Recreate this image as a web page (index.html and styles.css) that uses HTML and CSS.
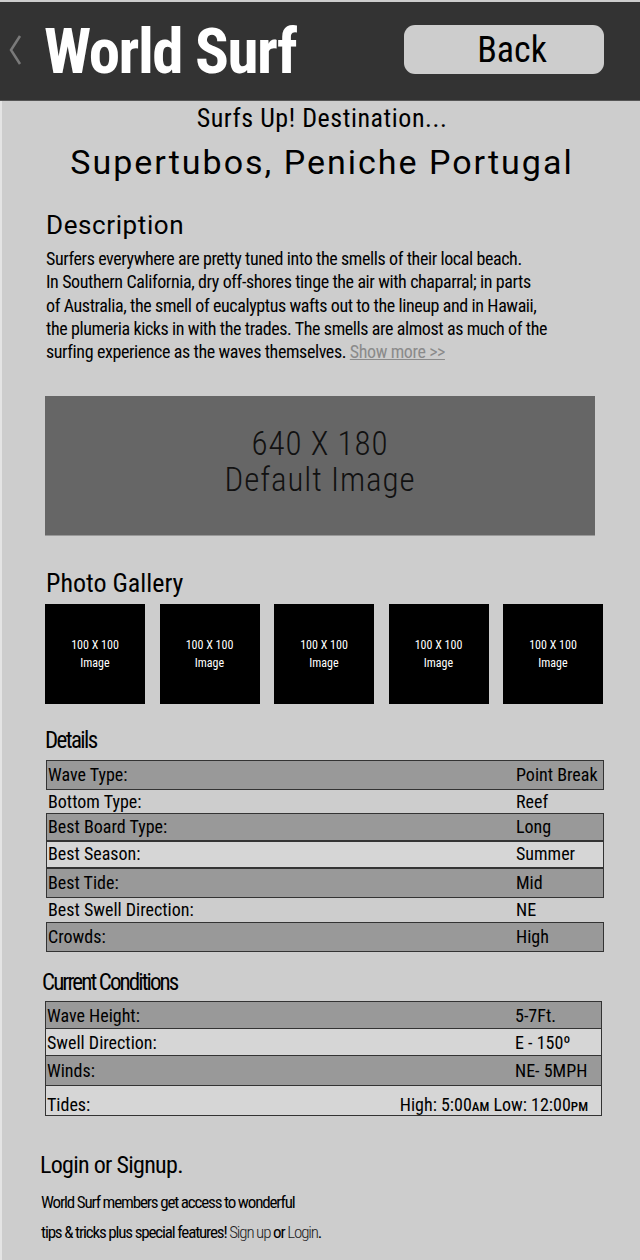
FILE: index.html
```html
<!DOCTYPE html>
<html lang="en">
<head>
<meta charset="utf-8">
<title>World Surf</title>
<link rel="stylesheet" href="styles.css">
</head>
<body>
<div class="page">
  <header class="topbar">
    <svg class="chev" width="14" height="32" viewBox="0 0 14 32"><polyline points="12,2 3,16 12,30" fill="none" stroke="#7a7a7a" stroke-width="2.5"/></svg>
    <h1 class="brand">World Surf</h1>
    <a class="back-btn" href="#">Back</a>
  </header>
  <main class="content">
    <p class="kicker">Surfs Up! Destination...</p>
    <h2 class="dest">Supertubos, Peniche Portugal</h2>

    <section class="desc">
      <h3 class="desc-title">Description</h3>
      <p class="desc-text">Surfers everywhere are pretty tuned into the smells of their local beach.<br>In Southern California, dry off-shores tinge the air with chaparral; in parts<br>of Australia, the smell of eucalyptus wafts out to the lineup and in Hawaii,<br>the plumeria kicks in with the trades. The smells are almost as much of the<br>surfing experience as the waves themselves. <a class="more" href="#">Show more &gt;&gt;</a></p>
    </section>

    <div class="hero"><span class="hero-line">640 X 180</span><span class="hero-line">Default Image</span></div>

    <h3 class="gallery-title">Photo Gallery</h3>
    <div class="gallery">
      <div class="thumb">100 X 100<br>Image</div>
      <div class="thumb">100 X 100<br>Image</div>
      <div class="thumb">100 X 100<br>Image</div>
      <div class="thumb">100 X 100<br>Image</div>
      <div class="thumb">100 X 100<br>Image</div>
    </div>

    <h3 class="details-title">Details</h3>
    <div class="table details">
      <div class="row shade h30"><span>Wave Type:</span><span>Point Break</span></div>
      <div class="row plain h23"><span>Bottom Type:</span><span>Reef</span></div>
      <div class="row shade h28"><span>Best Board Type:</span><span>Long</span></div>
      <div class="row light h27"><span>Best Season:</span><span>Summer</span></div>
      <div class="row shade h30"><span>Best Tide:</span><span>Mid</span></div>
      <div class="row plain h24"><span>Best Swell Direction:</span><span>NE</span></div>
      <div class="row shade h30"><span>Crowds:</span><span>High</span></div>
    </div>

    <h3 class="cond-title">Current Conditions</h3>
    <div class="table cond">
      <div class="row shade c27"><span>Wave Height:</span><span>5-7Ft.</span></div>
      <div class="row light c27"><span>Swell Direction:</span><span>E - 150º</span></div>
      <div class="row shade c30"><span>Winds:</span><span>NE- 5MPH</span></div>
      <div class="row light c30 tides"><span>Tides:</span><span class="tide-val">High: 5:00<small>AM</small> Low: 12:00<small>PM</small></span></div>
    </div>

    <section class="login">
      <h3 class="login-title">Login or Signup.</h3>
      <p class="login-text">World Surf members get access to wonderful<br>tips &amp; tricks plus special features! <a href="#" class="lnk">Sign up</a> or <a href="#" class="lnk">Login</a>.</p>
    </section>
  </main>
</div>
</body>
</html>
```

FILE: styles.css
```css
html, body {
  margin: 0;
  padding: 0;
  background: #cdcdcd;
}
.page {
  width: 640px;
  min-height: 1260px;
  background: #cdcdcd;
  border-left: 2px solid #e4e4e4;
  box-sizing: border-box;
  font-family: "Roboto Condensed", Roboto, "Liberation Sans", sans-serif;
  font-stretch: 80%;
  color: #000;
}
.topbar {
  height: 98px;
  margin-top: 2px;
  background: #333333;
  border-bottom: 1px solid #555;
  display: flex;
  align-items: center;
  padding-left: 8px;
  margin-left: -2px;
}
.chev {
  flex: none;
  margin-top: -2px;
}
.brand {
  margin: 0 0 0 22px;
  font-size: 63px;
  font-weight: 700;
  color: #fff;
  line-height: 1;
  letter-spacing: -1.5px;
  flex: 1;
}
.back-btn {
  width: 200px;
  height: 49px;
  box-sizing: border-box;
  padding-left: 16px;
  margin-right: 36px;
  margin-top: -3px;
  background: #cdcdcd;
  border-radius: 11px;
  color: #000;
  text-decoration: none;
  font-size: 36px;
  display: flex;
  align-items: center;
  justify-content: center;
}
.content {
  padding-left: 44px;
  padding-right: 34px;
}
.kicker {
  margin: 2px 0 0 -44px;
  width: 640px;
  text-align: center;
  font-size: 26px;
  letter-spacing: 0.55px;
  line-height: 30px;
}
.dest {
  margin: 10px 0 0 -44px;
  width: 640px;
  text-align: center;
  font-family: Roboto, "Liberation Sans", sans-serif;
  font-stretch: 100%;
  font-weight: 400;
  font-size: 34px;
  line-height: 38px;
  letter-spacing: 2px;
}
.desc-title {
  margin: 28px 0 0;
  font-family: Roboto, "Liberation Sans", sans-serif;
  font-stretch: 100%;
  font-weight: 400;
  font-size: 26px;
  line-height: 32px;
  letter-spacing: 0.6px;
}
.desc-text {
  margin: 6px 0 0;
  font-size: 18px;
  letter-spacing: -0.4px;
  line-height: 23.3px;
  white-space: nowrap;
}
.more {
  color: #8a8a8a;
  text-decoration: underline;
}
.hero {
  margin: 33px 0 0 -1px;
  width: 550px;
  height: 140px;
  box-sizing: border-box;
  padding-bottom: 8px;
  background: #666666;
  color: #111;
  font-weight: 300;
  font-size: 33px;
  letter-spacing: 0.9px;
  line-height: 36px;
  text-align: center;
  display: flex;
  flex-direction: column;
  align-items: center;
  justify-content: center;
  border-bottom: 1px solid #999;
}
.hero-line {
  display: block;
}
.gallery-title {
  margin: 31px 0 0;
  font-size: 26px;
  font-weight: 400;
  line-height: 32px;
}
.gallery {
  margin: 5px 0 0 -1px;
  width: 558px;
  display: flex;
  justify-content: space-between;
}
.thumb {
  width: 100px;
  height: 100px;
  background: #000;
  color: #fff;
  font-size: 12px;
  line-height: 18px;
  text-align: center;
  display: flex;
  align-items: center;
  justify-content: center;
}
.details-title {
  margin: 23px 0 0 -1px;
  font-size: 23px;
  font-weight: 400;
  line-height: 28px;
  letter-spacing: -1.6px;
}
.table {
  margin-top: 5px;
  width: 558px;
}
.row {
  display: grid;
  grid-template-columns: 468px 1fr;
  font-size: 18px;
  line-height: 22px;
  box-sizing: border-box;
  padding-left: 1px;
}
.shade {
  background: #999999;
  border: 1px solid #333;
}
.light {
  background: #d6d6d6;
  border: 1px solid #333;
}
.plain {
  border: 1px solid transparent;
}
.h30 { height: 30px; padding-top: 3px; }
.h23 { height: 23px; padding-top: 0; }
.h28 { height: 28px; padding-top: 2px; }
.h27 { height: 27px; padding-top: 1px; }
.h24 { height: 24px; padding-top: 0; }

.cond-title {
  margin: 17px 0 0 -4px;
  font-size: 23px;
  font-weight: 400;
  line-height: 28px;
  letter-spacing: -1.9px;
}
.cond {
  margin-top: 4px;
  margin-left: -1px;
  width: 557px;
}
.cond .row + .row { margin-top: -1px; }
.c27 { height: 28px; padding-top: 3px; }
.c30 { height: 31px; padding-top: 4px; }
.tides {
  padding-top: 8px;
  grid-template-columns: auto 1fr;
}
.tide-val {
  justify-self: end;
  padding-right: 13px;
  white-space: nowrap;
}
.tide-val small {
  font-size: 13px;
  font-weight: 500;
}
.login-title {
  margin: 35px 0 0 -6px;
  font-size: 24px;
  font-weight: 400;
  line-height: 28px;
  letter-spacing: -0.7px;
}
.login-text {
  margin: 8px 0 0 -5px;
  font-size: 17px;
  line-height: 30px;
  letter-spacing: -1.15px;
  white-space: nowrap;
}
.lnk {
  color: #222;
  text-decoration: none;
  font-weight: 300;
}
```
